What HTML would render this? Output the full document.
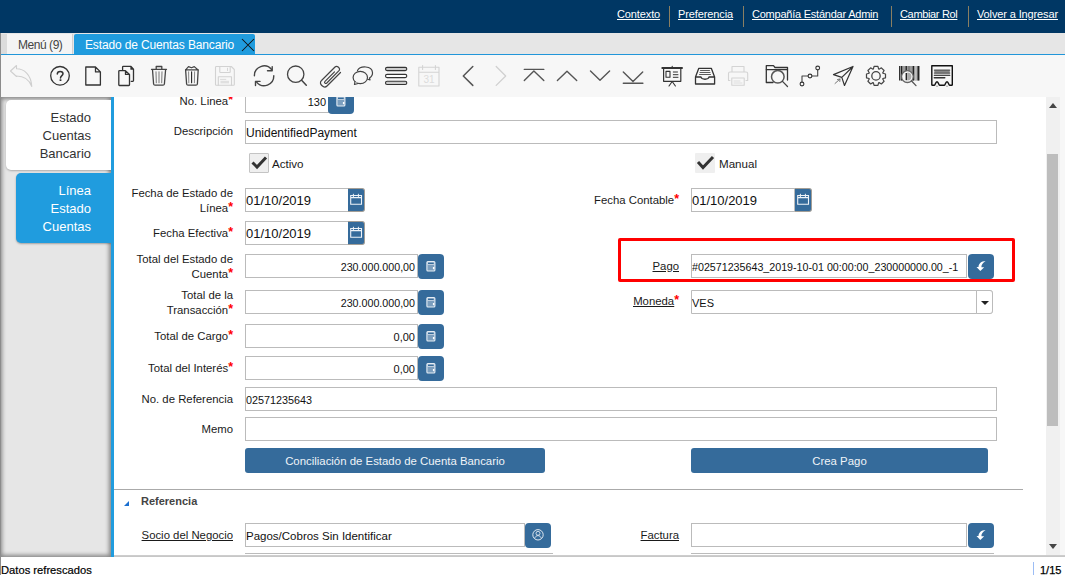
<!DOCTYPE html><html><head><meta charset="utf-8"><style>
*{box-sizing:border-box;margin:0;padding:0}
html,body{width:1065px;height:575px;overflow:hidden;background:#fff;font-family:"Liberation Sans",sans-serif;color:#333;position:relative}
.a{position:absolute}
#hdr{left:0;top:0;width:1065px;height:33px;background:#003764}
.hl{position:absolute;top:7px;font-size:11px;color:#fff;text-decoration:underline;white-space:nowrap;line-height:14px}
.hs{position:absolute;top:6px;width:1px;height:21px;background:#8a7f62}
#tabbar{left:0;top:33px;width:1065px;height:22px;background:#e6e6e6}
#tbline{left:0;top:54px;width:1065px;height:1px;background:#2196d9}
#toolbar{left:0;top:55px;width:1065px;height:42px;background:#f7f7f7}
#leftp{left:0;top:97px;width:111px;height:460px;background:#e6e6e6;box-shadow:inset 2px 2px 4px #888,inset -2px -2px 4px #888}
#vbar{left:111px;top:97px;width:3px;height:460px;background:#209cde}
#form{left:114px;top:97px;width:932px;height:459px;background:#fff;overflow:hidden}
#fin{position:absolute;left:-114px;top:-97px;width:1065px;height:575px}
#status{left:0;top:557px;width:1065px;height:18px;background:#fff}
.lbl{position:absolute;font-size:11.35px;color:#1a1a1a;text-align:right;line-height:15px;white-space:nowrap}
.req{color:#f00;font-size:12.5px;font-weight:bold;line-height:10px;vertical-align:1px}
.u{text-decoration:underline}
.inp{position:absolute;background:#fff;border:1px solid #bbb;height:24px;font-size:12px;color:#111;line-height:23px;padding:1px 1px 0 0;white-space:nowrap;overflow:hidden}
.r{text-align:right;padding-right:2px}
.btn{position:absolute;background:#356b9b;border-radius:4px;width:26px;height:25px}
.cbtn{position:absolute;background:#356b9b;border:1px solid #a39e96;border-left:none;border-radius:0 3px 3px 0;width:17px;height:24px}
.cb{position:absolute;width:20px;height:20px;background:#efefef;border-radius:1px}
.pbtn{position:absolute;background:#356b9b;border-radius:3px;color:#f0f4f8;font-size:11.4px;text-align:center;line-height:24px;height:25px}
</style></head><body>
<div id="hdr" class="a">
<span class="hl" style="left:617px;letter-spacing:-0.12px">Contexto</span>
<span class="hl" style="left:678px;letter-spacing:-0.11px">Preferencia</span>
<span class="hl" style="left:752px;letter-spacing:-0.23px">Compañía Estándar Admin</span>
<span class="hl" style="left:900px;letter-spacing:-0.34px">Cambiar Rol</span>
<span class="hl" style="left:977px;letter-spacing:-0.13px">Volver a Ingresar</span>
<div class="hs" style="left:669px"></div>
<div class="hs" style="left:743px"></div>
<div class="hs" style="left:891px"></div>
<div class="hs" style="left:968px"></div>
</div>
<div id="tabbar" class="a">
<div class="a" style="left:0;top:0;width:1px;height:22px;background:#888"></div>
<div class="a" style="left:1px;top:1px;width:6px;height:21px;background:#dcdcdc"></div>
<div class="a" style="left:7px;top:1px;width:66px;height:21px;background:#f4f4f4;border-right:1px solid #d0d0d0;font-size:12px;color:#444;line-height:22px;padding-left:11px;letter-spacing:-0.45px">Menú (9)</div>
<div class="a" style="left:74px;top:1px;width:181px;height:21px;background:#209cde;border-radius:2px 2px 0 0;font-size:12px;color:#fff;line-height:22px;padding-left:11px;letter-spacing:-0.14px;white-space:nowrap">Estado de Cuentas Bancario</div>
<svg class="a" style="left:241px;top:5px" width="14" height="14" viewBox="0 0 14 14"><path d="M1 1L13 13M13 1L1 13" stroke="#111" stroke-width="1.05"/></svg>
</div>
<div id="tbline" class="a"></div>
<div id="toolbar" class="a"><div class="a" style="left:0;top:0;width:1px;height:42px;background:#888"></div>
<svg class="a" style="left:0;top:0" width="1065" height="42" viewBox="0 55 1065 42" fill="none" stroke-linecap="round" stroke-linejoin="round">
<!-- undo (disabled) -->
<path d="M10.5 71 L16.5 65.5 L16.5 68.8 C24 69 31 74 31.8 86.5 C29 79 24 76 16.5 76 L16.5 76.5 Z" stroke="#cfcfcf" stroke-width="1.1"/>
<!-- help -->
<circle cx="60" cy="75.8" r="9.3" stroke="#333" stroke-width="1.3"/>
<path d="M57.3 74 C57.3 72.2 58.5 71.4 60.2 71.4 C61.9 71.4 63 72.3 63 73.7 C63 75.6 60.5 75.7 60.5 78" stroke="#333" stroke-width="1.5"/>
<rect x="59.6" y="79.3" width="1.8" height="1.7" fill="#333" stroke="none"/>
<!-- new -->
<path d="M85.8 67 H95.5 L100.4 71.9 V85 H85.8 Z M95.5 67 V71.9 H100.4" stroke="#333" stroke-width="1.3"/>
<!-- copy -->
<path d="M122.6 69.8 V67.1 Q122.6 66.4 123.3 66.4 H131 L133.5 69.2 V80.6 Q133.5 81.3 132.8 81.3 H131.2 M131 66.6 V69.2 H133.4" stroke="#333" stroke-width="1.3"/>
<path d="M118.8 71.3 Q118.8 70.6 119.5 70.6 H125.4 L129.5 74.5 V84.8 Q129.5 85.5 128.8 85.5 H119.5 Q118.8 85.5 118.8 84.8 Z M125.5 70.8 V74.4 H129.3" stroke="#333" stroke-width="1.3"/>
<!-- trash -->
<path d="M151.5 69.3 H166.5 M156.2 69 V66.5 H161.8 V69" stroke="#444" stroke-width="1.3"/>
<path d="M152.5 69.8 L153.6 84 Q153.8 85.2 155 85.2 H163 Q164.2 85.2 164.4 84 L165.6 69.8" stroke="#444" stroke-width="1.3"/>
<path d="M156 71.8 L156.3 82.8 M159 71.8 V82.8 M162 71.8 L161.7 82.8" stroke="#777" stroke-width="1"/>
<!-- trash 2 -->
<path d="M185.6 69.8 L188.5 66.6 L191.5 67.8 L194.3 66.6 L197.8 69.8 M185.6 69.8 H198" stroke="#444" stroke-width="1.2"/>
<path d="M185.6 69.8 L186.6 84 Q186.8 85.2 188 85.2 H196 Q197.2 85.2 197.4 84 L198.2 69.8" stroke="#444" stroke-width="1.3"/>
<path d="M188.6 71.8 L188.8 82.8 M194.6 71.8 L194.4 82.8" stroke="#888" stroke-width="1"/>
<path d="M191.6 71.8 V82.8" stroke="#222" stroke-width="1.1"/>
<!-- save (disabled) -->
<path d="M216.5 66.5 H231.3 L234.3 69.5 V84.5 Q234.3 85.3 233.5 85.3 H216.3 Q215.5 85.3 215.5 84.5 V67.3 Q215.5 66.5 216.5 66.5 Z" stroke="#d2d2d2" stroke-width="1.1"/>
<path d="M219.8 66.8 V71.8 Q219.8 72.5 220.5 72.5 H229.5 Q230.2 72.5 230.2 71.8 V66.8" stroke="#d2d2d2" stroke-width="1.1"/>
<path d="M227.5 68.2 V70.6" stroke="#d6d6d6" stroke-width="1"/>
<path d="M218.3 85.3 V76.8 H231.5 V85.3" stroke="#d2d2d2" stroke-width="1.1"/>
<path d="M220.5 79.4 H225.8" stroke="#d6d6d6" stroke-width="0.9"/>
<rect x="220.5" y="80.8" width="8.5" height="2.6" fill="#e0e0e0" stroke="none"/>
<!-- refresh -->
<path d="M254.4 75.8 A9.7 9.7 0 0 1 271.6 69.5" stroke="#444" stroke-width="1.4"/>
<path d="M267.5 70.8 H272.2 V66.6" stroke="#444" stroke-width="1.4"/>
<path d="M273.8 75.8 A9.7 9.7 0 0 1 256.6 82.1" stroke="#444" stroke-width="1.4"/>
<path d="M260 81.4 H255.5 V85.5" stroke="#444" stroke-width="1.4"/>
<!-- search -->
<circle cx="295.7" cy="74.2" r="8.2" stroke="#444" stroke-width="1.3"/>
<path d="M301.6 80.2 L306.3 85.2" stroke="#444" stroke-width="1.5"/>
<!-- attach -->
<path d="M340.5 72.5 L327 86 C324 89 318 83.5 321.5 80.5 L335 67 C337 65 341 68.5 339 70.7 L326.8 83 C325.4 84.2 323.8 82.8 325 81.3 L334.5 71.8" stroke="#444" stroke-width="1.2"/>
<!-- chat -->
<path d="M357.5 70.5 C360 65.5 372 65.5 372.5 72.5 C372.8 75.5 371 77 369.5 78 L370 80 L367 79" stroke="#444" stroke-width="1.2"/>
<ellipse cx="360.3" cy="77.5" rx="7.2" ry="6.2" stroke="#444" stroke-width="1.2" fill="#f7f7f7"/>
<path d="M355 81.5 L354.5 84.5 L358 83.5" stroke="#444" stroke-width="1.2" fill="#f7f7f7"/>
<!-- menu -->
<rect x="385.5" y="67.4" width="21.3" height="3.2" rx="1.6" stroke="#333" stroke-width="1.1" fill="#ccc"/>
<rect x="385.5" y="74.4" width="21.3" height="3.2" rx="1.6" stroke="#333" stroke-width="1.1" fill="#fff"/>
<rect x="385.5" y="81.3" width="21.3" height="3.2" rx="1.6" stroke="#333" stroke-width="1.1" fill="#ccc"/>
<!-- calendar disabled -->
<path d="M418.8 67.3 H439 V86 H418.8 Z M418.8 72.2 H439 M422.6 65.5 V69.5 M435.4 65.5 V69.5" stroke="#d4d4d4" stroke-width="1.1"/>
<text x="429" y="83.3" font-family="Liberation Sans" font-size="10" fill="#dcdcdc" text-anchor="middle" stroke="none">31</text>
<!-- prev -->
<path d="M472.8 66.5 L463.3 76 L472.8 85.4" stroke="#555" stroke-width="1.5"/>
<!-- next disabled -->
<path d="M496.2 66.5 L505.7 76 L496.2 85.4" stroke="#d0d0d0" stroke-width="1.3"/>
<!-- first -->
<path d="M524.3 69.4 H543.8 M524.3 80.6 L533.9 71 L543.8 80.6" stroke="#555" stroke-width="1.4"/>
<!-- up -->
<path d="M557.4 80.4 L567 71.2 L576.7 80.4" stroke="#555" stroke-width="1.4"/>
<!-- down -->
<path d="M590.5 71.1 L600 80.2 L609.6 71.1" stroke="#555" stroke-width="1.4"/>
<!-- last -->
<path d="M623.3 72 L633 81.6 L642.7 72 M623.3 83.3 H642.9" stroke="#555" stroke-width="1.4"/>
<!-- presentation -->
<path d="M662.3 67.9 H682" stroke="#333" stroke-width="2"/>
<path d="M663.6 68.5 V81.3 H680.8 V68.5" stroke="#333" stroke-width="1.2"/>
<rect x="666" y="71.4" width="4" height="5.8" stroke="#333" stroke-width="1.1"/>
<path d="M673.3 72 H677.5 M673.3 74.7 H678 M673.3 77.3 H678" stroke="#333" stroke-width="1"/>
<path d="M672.2 81.5 L669 86 M672.2 81.5 L675.4 86 M672.2 66.3 V67.5" stroke="#333" stroke-width="1.1"/>
<!-- inbox -->
<path d="M695.5 77 L698.8 68.3 H711.3 L714.6 77 V84 H695.5 Z M695.5 77 H701 C701.5 80 708.5 80 709 77 H714.6" stroke="#333" stroke-width="1.3"/>
<path d="M700.5 70.5 H709.5 M700 72.5 H710 M699.5 74.5 H710.5" stroke="#333" stroke-width="0.8"/>
<!-- printer disabled -->
<path d="M732 72 V66.5 H744 V72 M730 80.5 H728.5 V73.5 C728.5 72.5 729 72 730 72 H746 C747 72 747.7 72.5 747.7 73.5 V80.5 H746 M731.8 78 H744.2 V85.3 H731.8 Z" stroke="#d4d4d4" stroke-width="1.1"/>
<path d="M734 81 H740 M734 83 H742" stroke="#ddd" stroke-width="1"/>
<!-- folder search -->
<path d="M773 82.5 H766.3 V65.7 H773.5 L775 67.5 H787.5 V80" stroke="#333" stroke-width="1.3"/>
<path d="M766.3 69.6 H787.5" stroke="#333" stroke-width="1.2"/>
<circle cx="777.8" cy="76.8" r="6.3" stroke="#555" stroke-width="1.5" fill="#f7f7f7"/>
<path d="M782.5 81.4 L787.5 86.5" stroke="#444" stroke-width="1.3"/>
<!-- route -->
<path d="M802 82 V76 H808 M812 76 H817.7 V70" stroke="#444" stroke-width="1.1"/>
<circle cx="802" cy="84" r="1.9" stroke="#333" stroke-width="1.1"/>
<circle cx="810" cy="76" r="1.9" stroke="#333" stroke-width="1.1"/>
<circle cx="817.7" cy="68" r="1.9" stroke="#333" stroke-width="1.1"/>
<!-- send -->
<path d="M853 66.5 L833.5 74.6 L841.8 77.4 L844.5 85.5 Z M853 66.5 L841.8 77.4" stroke="#333" stroke-width="1.2"/>
<path d="M835 83.5 L840 79 M837.5 79.5 L840 79 L839.8 81.5" stroke="#777" stroke-width="1"/>
<!-- gear -->
<path d="M873.39 68.97 L874.07 66.39 L877.93 66.39 L878.61 68.97 L879.05 69.16 L881.36 67.82 L884.08 70.54 L882.74 72.85 L882.93 73.29 L885.51 73.97 L885.51 77.83 L882.93 78.51 L882.74 78.95 L884.08 81.26 L881.36 83.98 L879.05 82.64 L878.61 82.83 L877.93 85.41 L874.07 85.41 L873.39 82.83 L872.95 82.64 L870.64 83.98 L867.92 81.26 L869.26 78.95 L869.07 78.51 L866.49 77.83 L866.49 73.97 L869.07 73.29 L869.26 72.85 L867.92 70.54 L870.64 67.82 L872.95 69.16Z" stroke="#444" stroke-width="1.2"/>
<circle cx="876" cy="75.9" r="4.2" stroke="#444" stroke-width="1.3"/>
<!-- barcode search -->
<g stroke="none">
<rect x="901" y="66" width="18.5" height="14.5" fill="#9a9a9a"/>
<rect x="899" y="66" width="1.1" height="14.5" fill="#333"/>
<rect x="900.6" y="66" width="1.6" height="14.5" fill="#222"/>
<rect x="905.6" y="66" width="1.3" height="14.5" fill="#222"/>
<rect x="908.5" y="66" width="1" height="14.5" fill="#666"/>
<rect x="912.7" y="66" width="1.3" height="14.5" fill="#222"/>
<rect x="915.3" y="66" width="1.2" height="14.5" fill="#d0d0d0"/>
<rect x="917.6" y="66" width="1.7" height="14.5" fill="#222"/>
</g>
<circle cx="907.4" cy="76.6" r="5.9" stroke="#666" stroke-width="1.3" fill="#f7f7f7"/>
<path d="M907.4 72.6 A4 4 0 0 1 907.4 80.6 Z" fill="#aaa" stroke="none"/>
<rect x="905.6" y="73" width="1.5" height="7.2" fill="#222" stroke="none"/>
<path d="M911.6 81 L916 85.6" stroke="#555" stroke-width="1.3"/>
<!-- report -->
<path d="M931.8 65.8 H952.3 V84.7 C952.3 85.1 952 85.3 951.6 85.3 H949.6 C948.6 85.3 948.6 81.8 947 81.8 C945.4 81.8 945.4 85.3 944.4 85.3 H939.6 C938.6 85.3 938.6 81.8 937 81.8 C935.4 81.8 935.4 85.3 934.4 85.3 H932.5 C932.1 85.3 931.8 85.1 931.8 84.7 Z" stroke="#111" stroke-width="1.4"/>
<rect x="934.3" y="69.6" width="15.5" height="4" fill="#888" stroke="none"/>
<path d="M934.3 70.2 H949.8 M934.3 73.1 H949.8" stroke="#555" stroke-width="1"/>
<path d="M934.3 75.3 H949.8" stroke="#111" stroke-width="1.1"/>
<path d="M934.3 77.8 H944.8" stroke="#333" stroke-width="1.4"/>
<circle cx="937" cy="86.3" r="0.8" fill="#999" stroke="none"/>
<circle cx="947" cy="86.3" r="0.8" fill="#999" stroke="none"/>

</svg></div>
<div id="leftp" class="a">
<div class="a" style="left:6px;top:3px;width:105px;height:70px;background:#fff;border-radius:5px 0 0 5px;box-shadow:0 1px 2px rgba(0,0,0,.25)"></div>
<div class="a" style="left:6px;top:12px;width:85px;font-size:13px;line-height:18px;color:#333;text-align:right">Estado<br>Cuentas<br>Bancario</div>
<div class="a" style="left:16px;top:76px;width:95px;height:70px;background:#209cde;border-radius:5px 0 0 5px;box-shadow:0 1px 2px rgba(0,0,0,.3)"></div>
<div class="a" style="left:16px;top:85px;width:75px;font-size:13px;line-height:18px;color:#fff;text-align:right">Línea<br>Estado<br>Cuentas</div>
</div>
<div id="vbar" class="a"></div>
<div id="form" class="a"><div id="fin">
<!-- No. Linea -->
<div class="lbl" style="left:133px;top:93.6px;width:100px">No. Linea<span class="req">*</span></div>
<div class="inp r" style="left:245px;top:89px;width:84px;font-size:11px">130</div>
<div class="btn" style="left:328px;top:89px;width:26px;height:25px"><svg class="a" style="left:8px;top:7px" width="10" height="11"><rect x="0.9" y="0.6" width="8" height="9.4" rx="1" stroke="#e6edf4" stroke-width="1.1" fill="rgba(255,255,255,.35)"/><rect x="1.5" y="1.2" width="6.8" height="2.4" fill="#e6edf4"/><rect x="2" y="1.5" width="5.8" height="1.5" fill="#356b9b"/><rect x="6.9" y="6" width="1.4" height="2.2" fill="#fff"/></svg></div>
<!-- Descripcion -->
<div class="lbl" style="left:133px;top:124px;width:100px">Descripción</div>
<div class="inp" style="left:245px;top:120px;width:752px">UnidentifiedPayment</div>
<!-- checkboxes -->
<div class="cb" style="left:249px;top:153px;border:1px solid #c4c4c4"></div>
<svg class="a" style="left:249px;top:153px" width="20" height="20"><path d="M3.5 9.5L8 14L17 4.5" stroke="#333" stroke-width="3" fill="none"/></svg>
<div class="lbl" style="left:272px;top:156.4px;font-size:11.6px">Activo</div>
<div class="cb" style="left:695px;top:153px"></div>
<svg class="a" style="left:695px;top:153px" width="20" height="20"><path d="M3 9L8 14.5L18 4" stroke="#333" stroke-width="3" fill="none"/></svg>
<div class="lbl" style="left:719px;top:156.4px;font-size:11.6px">Manual</div>
<!-- Fecha de Estado de Linea -->
<div class="lbl" style="left:120px;top:185.6px;width:113px">Fecha de Estado de<br>Línea<span class="req">*</span></div>
<div class="inp" style="left:245px;top:188px;width:104px;font-size:13px;padding-top:0">01/10/2019</div>
<div class="cbtn" style="left:348px;top:188px"><svg class="a" style="left:1px;top:2.5px" width="14" height="14"><path d="M1.7 3.5V12.3H12.5V3.5Z M1.7 5.6H12.5" stroke="#eef3f8" stroke-width="1.1" fill="none"/><path d="M4.4 1.8V5 M9.4 1.8V5" stroke="#eef3f8" stroke-width="1"/></svg></div>
<!-- Fecha Contable -->
<div class="lbl" style="left:560px;top:192.6px;width:119px">Fecha Contable<span class="req">*</span></div>
<div class="inp" style="left:691px;top:188px;width:104px;font-size:13px;padding-top:0">01/10/2019</div>
<div class="cbtn" style="left:795px;top:188px"><svg class="a" style="left:1px;top:2.5px" width="14" height="14"><path d="M1.7 3.5V12.3H12.5V3.5Z M1.7 5.6H12.5" stroke="#eef3f8" stroke-width="1.1" fill="none"/><path d="M4.4 1.8V5 M9.4 1.8V5" stroke="#eef3f8" stroke-width="1"/></svg></div>
<!-- Fecha Efectiva -->
<div class="lbl" style="left:120px;top:225.8px;width:113px">Fecha Efectiva<span class="req">*</span></div>
<div class="inp" style="left:245px;top:221px;width:104px;font-size:13px;padding-top:0">01/10/2019</div>
<div class="cbtn" style="left:348px;top:221px"><svg class="a" style="left:1px;top:2.5px" width="14" height="14"><path d="M1.7 3.5V12.3H12.5V3.5Z M1.7 5.6H12.5" stroke="#eef3f8" stroke-width="1.1" fill="none"/><path d="M4.4 1.8V5 M9.4 1.8V5" stroke="#eef3f8" stroke-width="1"/></svg></div>
<!-- Total del Estado de Cuenta -->
<div class="lbl" style="left:120px;top:251.8px;width:113px">Total del Estado de<br>Cuenta<span class="req">*</span></div>
<div class="inp r" style="left:245px;top:254px;width:173px;font-size:10.7px">230.000.000,00</div>
<div class="btn" style="left:418px;top:254px"><svg class="a" style="left:8px;top:7px" width="10" height="11"><rect x="0.9" y="0.6" width="8" height="9.4" rx="1" stroke="#e6edf4" stroke-width="1.1" fill="rgba(255,255,255,.35)"/><rect x="1.5" y="1.2" width="6.8" height="2.4" fill="#e6edf4"/><rect x="2" y="1.5" width="5.8" height="1.5" fill="#356b9b"/><rect x="6.9" y="6" width="1.4" height="2.2" fill="#fff"/></svg></div>
<!-- Pago (highlighted) -->
<div class="a" style="left:618px;top:238px;width:397px;height:44px;border:3px solid #f00;border-radius:2px"></div>
<div class="lbl u" style="left:560px;top:258.8px;width:119px">Pago</div>
<div class="inp" style="left:691px;top:254px;width:276px;font-size:10.7px;line-height:22px">#02571235643_2019-10-01 00:00:00_230000000.00_-1</div>
<div class="btn" style="left:968px;top:254px"><svg class="a" style="left:0;top:0" width="26" height="25"><path d="M17.6 6.9C13.2 7.2 10.6 9.4 10.5 12.9L8.5 13L12.3 16.9L16.2 13.2L13.4 13.2C13.3 10.8 14.6 8.9 17.6 6.9Z" fill="#fff"/></svg></div>
<!-- Total de la Transaccion -->
<div class="lbl" style="left:120px;top:288px;width:113px">Total de la<br>Transacción<span class="req">*</span></div>
<div class="inp r" style="left:245px;top:290px;width:173px;font-size:10.7px">230.000.000,00</div>
<div class="btn" style="left:418px;top:290px"><svg class="a" style="left:8px;top:7px" width="10" height="11"><rect x="0.9" y="0.6" width="8" height="9.4" rx="1" stroke="#e6edf4" stroke-width="1.1" fill="rgba(255,255,255,.35)"/><rect x="1.5" y="1.2" width="6.8" height="2.4" fill="#e6edf4"/><rect x="2" y="1.5" width="5.8" height="1.5" fill="#356b9b"/><rect x="6.9" y="6" width="1.4" height="2.2" fill="#fff"/></svg></div>
<!-- Moneda -->
<div class="lbl u" style="left:560px;top:294.3px;width:119px"><span class="u">Moneda</span><span class="req" style="text-decoration:none;display:inline-block">*</span></div>
<div class="inp" style="left:691px;top:290px;width:302px;font-size:11px;border-radius:0 3px 3px 0">VES</div>
<div class="a" style="left:976px;top:290px;width:17px;height:24px;border:1px solid #bbb;border-radius:0 3px 3px 0;background:#fff"><svg class="a" style="left:3px;top:9px" width="10" height="6"><path d="M1 1L5 5L9 1Z" fill="#222"/></svg></div>
<!-- Total de Cargo -->
<div class="lbl" style="left:120px;top:329px;width:113px">Total de Cargo<span class="req">*</span></div>
<div class="inp r" style="left:245px;top:324px;width:173px;font-size:11px">0,00</div>
<div class="btn" style="left:418px;top:324px"><svg class="a" style="left:8px;top:7px" width="10" height="11"><rect x="0.9" y="0.6" width="8" height="9.4" rx="1" stroke="#e6edf4" stroke-width="1.1" fill="rgba(255,255,255,.35)"/><rect x="1.5" y="1.2" width="6.8" height="2.4" fill="#e6edf4"/><rect x="2" y="1.5" width="5.8" height="1.5" fill="#356b9b"/><rect x="6.9" y="6" width="1.4" height="2.2" fill="#fff"/></svg></div>
<!-- Total del Interes -->
<div class="lbl" style="left:120px;top:361px;width:113px">Total del Interés<span class="req">*</span></div>
<div class="inp r" style="left:245px;top:356px;width:173px;font-size:11px">0,00</div>
<div class="btn" style="left:418px;top:356px"><svg class="a" style="left:8px;top:7px" width="10" height="11"><rect x="0.9" y="0.6" width="8" height="9.4" rx="1" stroke="#e6edf4" stroke-width="1.1" fill="rgba(255,255,255,.35)"/><rect x="1.5" y="1.2" width="6.8" height="2.4" fill="#e6edf4"/><rect x="2" y="1.5" width="5.8" height="1.5" fill="#356b9b"/><rect x="6.9" y="6" width="1.4" height="2.2" fill="#fff"/></svg></div>
<!-- No. de Referencia -->
<div class="lbl" style="left:120px;top:392.4px;width:113px">No. de Referencia</div>
<div class="inp" style="left:245px;top:387px;width:752px;font-size:10.8px">02571235643</div>
<!-- Memo -->
<div class="lbl" style="left:120px;top:421.6px;width:113px">Memo</div>
<div class="inp" style="left:245px;top:417px;width:752px"></div>
<!-- buttons -->
<div class="pbtn" style="left:245px;top:448px;width:300px;line-height:26px">Conciliación de Estado de Cuenta Bancario</div>
<div class="pbtn" style="left:691px;top:448px;width:297px;line-height:26px">Crea Pago</div>
<!-- separator -->
<div class="a" style="left:114px;top:489px;width:909px;height:1px;background:#aaa"></div>
<!-- Referencia -->
<svg class="a" style="left:123px;top:500px" width="7" height="7"><path d="M6 1V6H1Z" fill="#1a6fd0"/></svg>
<div class="a" style="left:141px;top:494px;font-size:11px;font-weight:bold;color:#444;line-height:15px">Referencia</div>
<!-- Socio -->
<div class="lbl u" style="left:120px;top:527.5px;width:113px">Socio del Negocio</div>
<div class="inp" style="left:245px;top:523px;width:280px;font-size:11.5px">Pagos/Cobros Sin Identificar</div>
<div class="btn" style="left:525px;top:523px"><svg class="a" style="left:0;top:0" width="26" height="25"><circle cx="13" cy="11.8" r="5.2" stroke="#dfe7f0" stroke-width="1" fill="none"/><circle cx="13" cy="10.3" r="2" stroke="#dfe7f0" stroke-width="0.9" fill="none"/><path d="M9.6 15.6C10.2 13.5 11.5 12.6 13 12.6C14.5 12.6 15.8 13.5 16.4 15.6" stroke="#dfe7f0" stroke-width="0.9" fill="none"/></svg></div>
<!-- Factura -->
<div class="lbl u" style="left:560px;top:527.5px;width:119px">Factura</div>
<div class="inp" style="left:691px;top:523px;width:276px"></div>
<div class="btn" style="left:968px;top:523px"><svg class="a" style="left:0;top:0" width="26" height="25"><path d="M17.6 6.9C13.2 7.2 10.6 9.4 10.5 12.9L8.5 13L12.3 16.9L16.2 13.2L13.4 13.2C13.3 10.8 14.6 8.9 17.6 6.9Z" fill="#fff"/></svg></div>
<!-- next row partial -->
<div class="a" style="left:245px;top:553px;width:308px;height:5px;border-top:1px solid #bbb"></div>
<div class="a" style="left:691px;top:553px;width:303px;height:5px;border-top:1px solid #bbb"></div>


</div></div>
<div class="a" style="left:1046px;top:97px;width:14px;height:459px;background:#f0f0f0"></div>
<div class="a" style="left:1060px;top:97px;width:5px;height:459px;background:#f7f7f7"></div>
<div class="a" style="left:1047px;top:154px;width:11px;height:272px;background:#bdbdbd"></div>
<svg class="a" style="left:1046px;top:100px" width="14" height="10"><path d="M3 8L7 3L11 8Z" fill="#444"/></svg>
<svg class="a" style="left:1046px;top:542px" width="14" height="10"><path d="M3 2L7 7L11 2Z" fill="#444"/></svg>
<div id="status" class="a">
<span class="a" style="left:1px;top:6px;font-size:11.2px;color:#000;line-height:14px;white-space:nowrap;-webkit-text-stroke:0.2px #000">Datos refrescados</span>
<div class="a" style="left:1033px;top:5px;width:1px;height:13px;background:#9cbdf5"></div>
<span class="a" style="left:1040px;top:6px;font-size:11px;color:#000;line-height:14px;-webkit-text-stroke:0.25px #000">1/15</span>
</div>
<div class="a" style="left:114px;top:555px;width:951px;height:2px;background:linear-gradient(#d0d0d0,#c4c4c4)"></div>
<div class="a" style="left:0;top:33px;width:1px;height:542px;background:#8c8c8c"></div>
</body></html>
